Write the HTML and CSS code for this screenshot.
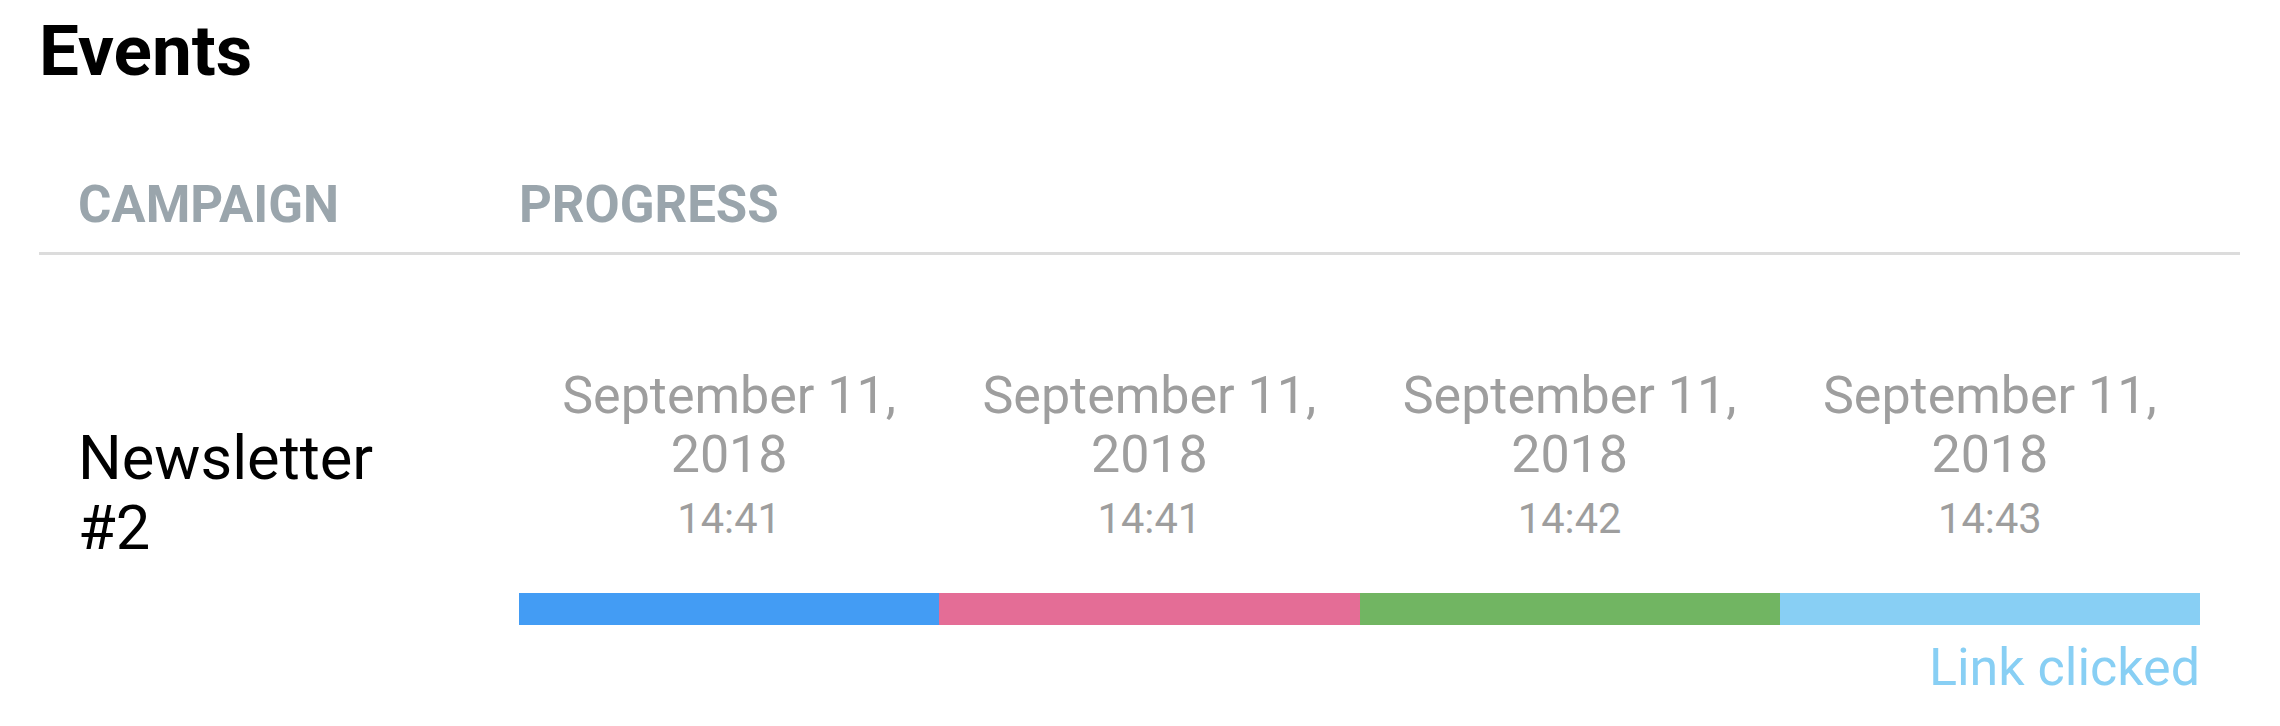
FILE: index.html
```html
<!DOCTYPE html>
<html lang="en">
<head>
  <meta charset="UTF-8">
  <meta name="viewport" content="width=device-width, initial-scale=1.0">
  <title>Events</title>
  <link rel="stylesheet" href="styles.css">
</head>
<body>
  <div class="page">
    <h1 class="title">Events</h1>

    <div class="events">
      <div class="events-head">
        <div class="cell">CAMPAIGN</div>
        <div class="cell">PROGRESS</div>
      </div>

      <div class="events-row">
        <div class="cell campaign-name">Newsletter #2</div>
        <div class="cell progress">
          <div class="steps">
            <div class="step">
              <div class="step-date">September 11, 2018</div>
              <div class="step-time">14:41</div>
            </div>
            <div class="step">
              <div class="step-date">September 11, 2018</div>
              <div class="step-time">14:41</div>
            </div>
            <div class="step">
              <div class="step-date">September 11, 2018</div>
              <div class="step-time">14:42</div>
            </div>
            <div class="step">
              <div class="step-date">September 11, 2018</div>
              <div class="step-time">14:43</div>
            </div>
          </div>
          <!-- one segment per event -->
          <div class="bar">
            <span class="seg sent"></span>
            <span class="seg delivered"></span>
            <span class="seg opened"></span>
            <span class="seg clicked"></span>
          </div>
          <div class="status">Link clicked</div>
        </div>
      </div>
    </div>
  </div>
</body>
</html>
```

FILE: styles.css
```css
body {
  margin: 0;
  background: #fff;
  font-family: Roboto, "Liberation Sans", Arial, sans-serif;
  color: #000;
}
.page {
  padding: 0 40px 0 39px;
}
.title {
  margin: 15px 0 90px 0;
  font-size: 71px;
  font-weight: 700;
  line-height: 1;
}
.events-head,
.events-row {
  display: grid;
  grid-template-columns: 441px 1fr;
}
.cell {
  padding: 0 40px 0 39px;
}
.events-head {
  font-size: 51px;
  font-weight: 700;
  line-height: 1.15;
  color: #9aa5ac;
  padding-bottom: 17px;
  border-bottom: 3px solid #dcdcdc;
}
.events-row {
  padding-top: 111px;
}
.campaign-name {
  padding-top: 57px;
  font-size: 61.4px;
  line-height: 1.15;
}
.steps {
  display: grid;
  grid-template-columns: repeat(4, 1fr);
  text-align: center;
  color: #9e9e9e;
}
.step-date {
  font-size: 52px;
  line-height: 1.15;
}
.step-time {
  margin-top: 10px;
  font-size: 41.6px;
  line-height: 1.15;
}
.bar {
  display: flex;
  height: 32px;
  margin-top: 50px;
}
.seg {
  flex: 1;
}
.sent { background: #439cf4; }
.delivered { background: #e46d96; }
.opened { background: #71b562; }
.clicked { background: #88cff4; }
.status {
  margin-top: 13px;
  text-align: right;
  font-size: 52px;
  line-height: 1.15;
  color: #88cff4;
}
```
